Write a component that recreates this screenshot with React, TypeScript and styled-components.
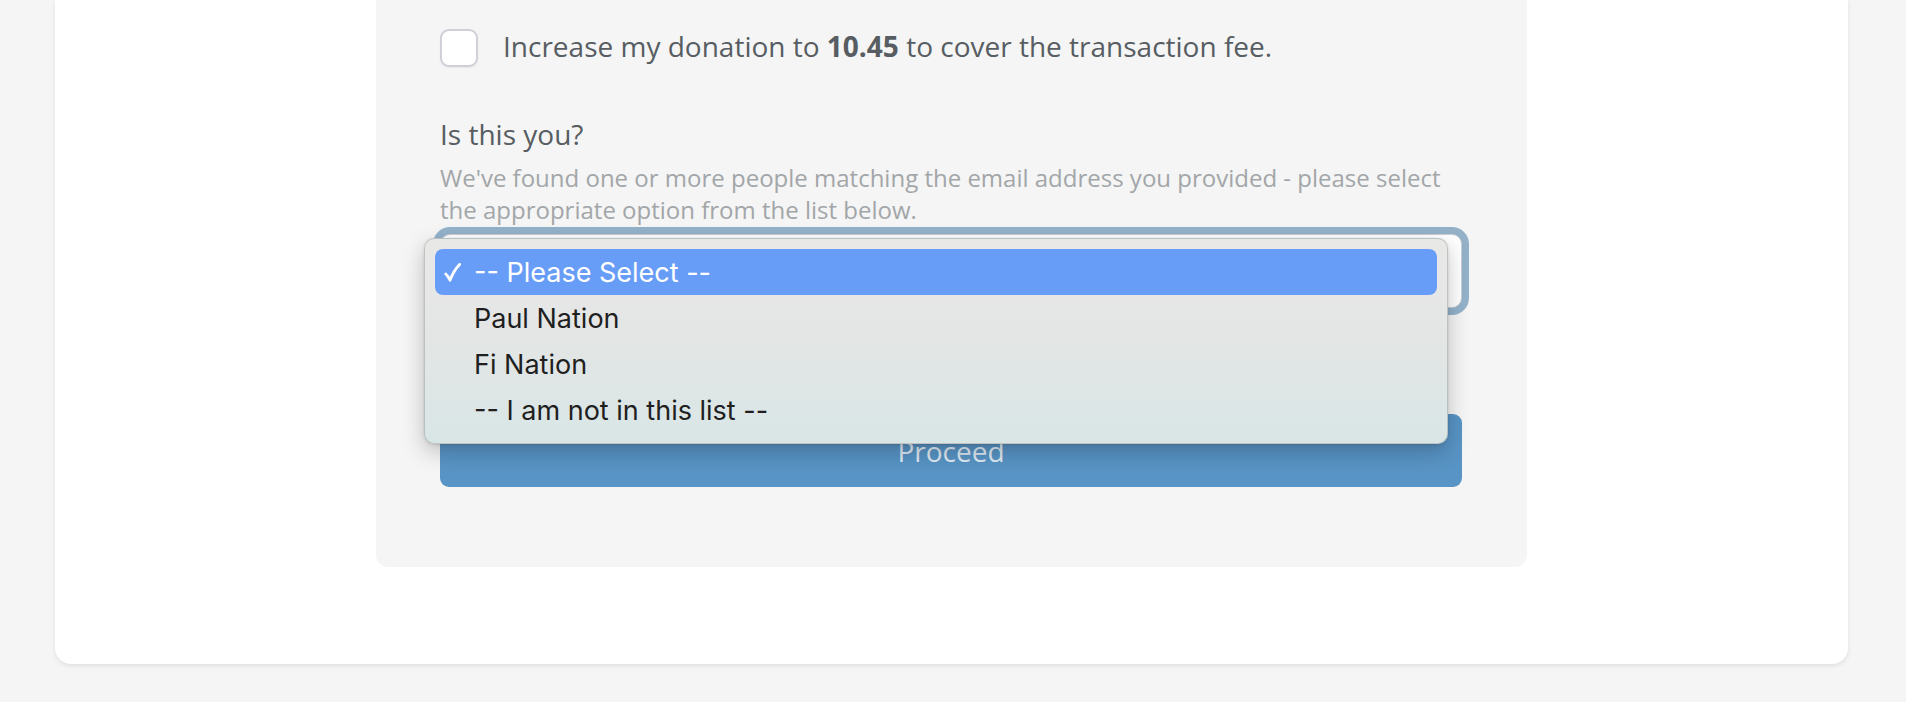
import React from "react";
import styled, {createGlobalStyle} from "styled-components";

const GlobalStyle = createGlobalStyle`
  html, body {
    margin: 0;
    padding: 0;
    background: #f4f5f4;
    font-family: "Open Sans", "Liberation Sans", sans-serif;
  }
  * { box-sizing: border-box; }`

const Page = styled.div`
  padding: 0 58px 40px 55px;`
const Card = styled.div`
  background: #ffffff;
  border-radius: 0 0 16px 16px;
  box-shadow: 0 2px 5px rgba(0, 0, 0, 0.09);
  padding-bottom: 97px;
  display: flex;
  justify-content: center;`
const Panel = styled.div`
  width: 1151px;
  background: #f4f5f4;
  border-radius: 0 0 12px 12px;
  padding: 29px 65px 80px 64px;
  display: flex;
  flex-direction: column;`
const CheckRow = styled.label`
  display: flex;
  align-items: center;
  gap: 25px;
  height: 38px;
  font-size: 28px;
  line-height: 34px;
  color: #575d62;`
const LabelText = styled.span`
  margin-bottom: 5px;`
const Box = styled.span`
  width: 38px;
  height: 38px;
  flex-shrink: 0;
  background: #ffffff;
  border: 2px solid #d3cfd9;
  border-radius: 9px;
  box-shadow: 0 1px 2px rgba(0, 0, 0, 0.06);`
const Label = styled.div`
  margin-top: 47px;
  font-size: 28px;
  line-height: 40px;
  color: #575d62;`
const Hint = styled.p`
  margin: 8px 0 0;
  font-size: 24px;
  line-height: 32px;
  color: #a3a6a9;`
const SelectWrap = styled.div`
  position: relative;
  margin-top: 8px;`
const SelectBox = styled.div`
  height: 74px;
  background: #ffffff;
  border: 1px solid #c9ced3;
  border-radius: 10px;
  box-shadow: 0 0 0 7px #93b2ca;`
const Menu = styled.ul`
  position: absolute;
  top: 4px;
  left: -16px;
  width: 1024px;
  margin: 0;
  padding: 10px 10px;
  list-style: none;
  background: linear-gradient(180deg, #e8e8e7 0%, #e4e6e5 45%, #d9e6e6 100%);
  border: 1px solid rgba(0, 0, 0, 0.16);
  border-radius: 10px;
  box-shadow: 0 8px 22px rgba(0, 0, 0, 0.22), 0 1px 3px rgba(0, 0, 0, 0.12);
  font-family: Inter, "Noto Sans", sans-serif;
  font-size: 27px;
  z-index: 2;`
const Option = styled.li<{ $active?: boolean }>`
  display: flex;
  align-items: center;
  height: 46px;
  padding-left: 8px;
  border-radius: 8px;
  color: ${p => p.$active ? "#ffffff" : "#1f1f1f"};
  background: ${p => p.$active ? "#679df6" : "transparent"};`
const Tick = styled.span`
  width: 31px;
  flex-shrink: 0;
  display: flex;
  align-items: center;
  padding-left: 1px;`
const Button = styled.button`
  margin-top: 106px;
  height: 73px;
  border: none;
  border-radius: 9px;
  background: #5894c5;
  color: rgba(255, 255, 255, 0.82);
  font-family: "Open Sans", "Liberation Sans", sans-serif;
  font-size: 28px;
  cursor: pointer;`

const Check = () => (
    <svg width="17" height="19" viewBox="0 0 17 19">
        <path d="M1.8 11 C3.5 12.5 4.8 14.6 6 17.2 C8.6 10.5 11.5 5.5 15.6 1.4"
              fill="none" stroke="#ffffff" strokeWidth="2.8" strokeLinecap="round" strokeLinejoin="round"/>
    </svg>
)

const options = ["-- Please Select --", "Paul Nation", "Fi Nation", "-- I am not in this list --"]

export default function App() {
    return (
        <>
            <GlobalStyle/>
            <Page>
                <Card>
                    <Panel>
                        <CheckRow>
                            <Box/>
                            <LabelText>Increase my donation to <b>10.45</b> to cover the transaction fee.</LabelText>
                        </CheckRow>

                        <Label>Is this you?</Label>
                        <Hint>We've found one or more people matching the email address you provided - please select
                            the appropriate option from the list below.</Hint>

                        <SelectWrap>
                            <SelectBox/>
                            <Menu>
                                {options.map((o, i) =>
                                    <Option key={o} $active={i === 0}>
                                        <Tick>{i === 0 && <Check/>}</Tick>
                                        {o}
                                    </Option>
                                )}
                            </Menu>
                        </SelectWrap>

                        <Button disabled>Proceed</Button>
                    </Panel>
                </Card>
            </Page>
        </>
    )
}
